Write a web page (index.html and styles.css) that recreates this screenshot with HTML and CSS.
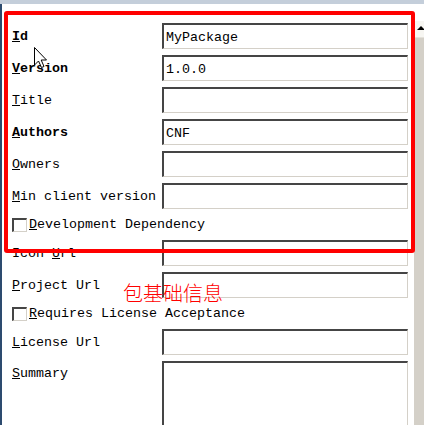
FILE: index.html
```html
<!DOCTYPE html>
<html>
<head>
<meta charset="utf-8">
<link rel="stylesheet" href="styles.css">
</head>
<body>
<div class="window">
  <div class="topbar"></div>
  <div class="content">
    <form class="form">
      <label class="lbl"><b><u>I</u>d</b></label>
      <div class="field">MyPackage</div>
      <label class="lbl"><b><u>V</u>ersion</b></label>
      <div class="field">1.0.0</div>
      <label class="lbl"><u>T</u>itle</label>
      <div class="field"></div>
      <label class="lbl"><b><u>A</u>uthors</b></label>
      <div class="field">CNF</div>
      <label class="lbl"><u>O</u>wners</label>
      <div class="field"></div>
      <label class="lbl"><u>M</u>in client version</label>
      <div class="field"></div>
      <div class="check-row"><span class="box"></span><span><u>D</u>evelopment Dependency</span></div>
      <label class="lbl">Icon <u>U</u>rl</label>
      <div class="field"></div>
      <label class="lbl"><u>P</u>roject Url</label>
      <div class="field"></div>
      <div class="check-row"><span class="box"></span><span><u>R</u>equires License Acceptance</span></div>
      <label class="lbl"><u>L</u>icense Url</label>
      <div class="field"></div>
      <label class="lbl lbl-top"><u>S</u>ummary</label>
      <div class="field area"></div>
    </form>
    <div class="scrollbar">
      <div class="sb-top"></div>
      <div class="sb-btn"><span class="tri"></span></div>
    </div>
  </div>
  <div class="annot-box"></div>
  <div class="annot-text">包基础信息</div>
  <svg class="cursor" width="13" height="22" viewBox="0 0 13 22"><path d="M0.5 0.5 L0.5 18 L4.5 14 L7.5 20.5 L10 19.5 L7.2 13 L12.5 13 Z" fill="#fff" stroke="#000" stroke-width="1"/></svg>
</div>
</body>
</html>
```
FILE: styles.css
```css
html, body {
  margin: 0;
  padding: 0;
  background: #fff;
  overflow: hidden;
}
.window {
  position: relative;
  width: 424px;
  height: 425px;
  overflow: hidden;
  background: #fff;
  font-family: "Liberation Mono", "DejaVu Sans Mono", monospace;
  font-size: 13.33px;
  color: #000;
}
.topbar {
  height: 4px;
  background: #c4ceda;
}
.content {
  display: flex;
  height: 421px;
  border-left: 2px solid #2d4b6f;
}
.form {
  display: grid;
  grid-template-columns: 150px 246px;
  grid-auto-rows: auto;
  row-gap: 6px;
  padding: 19px 0 0 10px;
  margin: 0;
  flex: none;
  align-content: start;
}
.lbl {
  display: block;
  align-self: center;
  white-space: nowrap;
  line-height: 15px;
}
.lbl-top {
  align-self: start;
  padding-top: 5px;
}
.field {
  box-sizing: border-box;
  height: 26px;
  border-top: 2px solid #454545;
  border-left: 2px solid #454545;
  border-right: 1px solid #d4d0c8;
  border-bottom: 1px solid #d4d0c8;
  background: #fff;
  padding: 2px 2px 0;
  display: flex;
  align-items: center;
  line-height: 15px;
}
.area {
  height: 90px;
}
.check-row {
  grid-column: 1 / span 2;
  display: flex;
  align-items: center;
  gap: 2px;
  height: 19px;
  white-space: nowrap;
}
.box {
  box-sizing: border-box;
  width: 15px;
  height: 14px;
  background: #fff;
  border-top: 2px solid #454545;
  border-left: 2px solid #454545;
  border-right: 1px solid #d4d0c8;
  border-bottom: 1px solid #d4d0c8;
  flex: none;
}
.scrollbar {
  margin-left: auto;
  width: 10px;
  display: flex;
  flex-direction: column;
  background: #d4d0c8;
}
.sb-top {
  height: 17px;
  background: #fff;
}
.sb-btn {
  height: 16px;
  background: #f7f6f2;
  border-left: 1px solid #dcd9d2;
  border-bottom: 1px solid #e4e1da;
  position: relative;
}
.tri {
  position: absolute;
  left: 2px;
  top: 5px;
  width: 0;
  height: 0;
  border-left: 4px solid transparent;
  border-right: 4px solid transparent;
  border-bottom: 4px solid #000;
}
.annot-box {
  position: absolute;
  left: 4px;
  top: 11px;
  width: 411px;
  height: 242px;
  box-sizing: border-box;
  border: 4px solid #ff0000;
  border-radius: 3px;
}
.annot-text {
  position: absolute;
  left: 123px;
  top: 280px;
  font-family: "Noto Sans CJK SC", sans-serif;
  font-weight: 300;
  font-size: 20px;
  line-height: 26px;
  color: #ff0000;
}
.cursor {
  position: absolute;
  left: 34px;
  top: 47px;
}
```
